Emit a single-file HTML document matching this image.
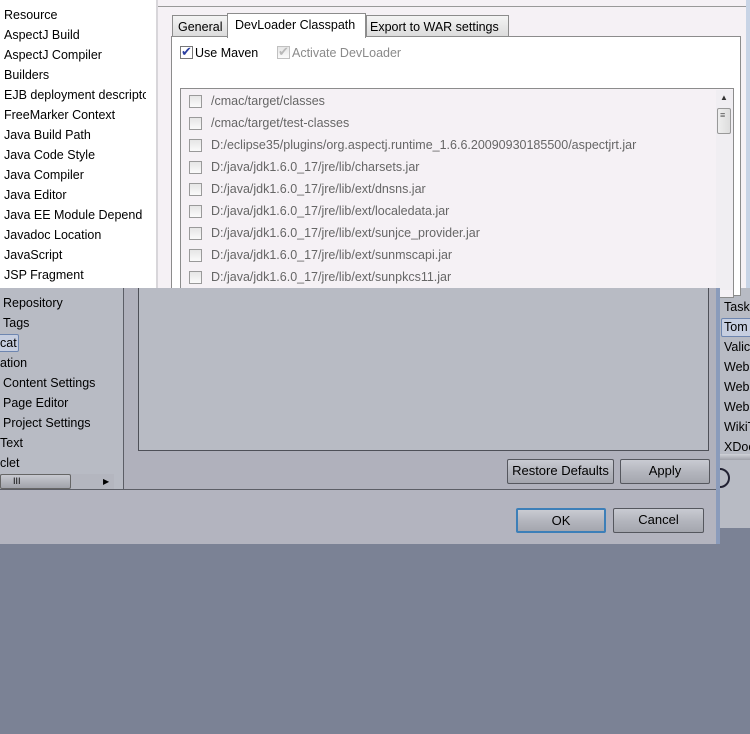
<!DOCTYPE html>
<html><head><style>
*{margin:0;padding:0;box-sizing:border-box}
body{width:750px;height:734px;position:relative;overflow:hidden;background:#7b8295;font-family:"Liberation Sans","DejaVu Sans",sans-serif;font-size:12.5px;color:#000}
.a{position:absolute}
.t{position:absolute;white-space:nowrap;line-height:16px}
.btn{position:absolute;border:1px solid #55575e;border-radius:2px;background:linear-gradient(#c9cbd2,#b4b6be 50%,#a4a6ae);text-align:center;line-height:22px;font-size:13px}
.cb{position:absolute;width:13px;height:13px;border:1px solid #9a9a9a;background:linear-gradient(#e6e6e6,#fafafa)}
</style></head><body>
<!-- right window (behind) -->
<div class="a" style="left:716px;top:288px;width:34px;height:240px;background:#b8bbc4"></div>
<div class="a" style="left:720px;top:454px;width:30px;height:6px;background:linear-gradient(#d0d2d8,#a0a2aa)"></div>
<div class="t" style="left:724px;top:279px;height:9px;overflow:hidden">Task</div>
<div class="t" style="left:724px;top:299px">Task</div>
<div class="a" style="left:721px;top:318px;width:32px;height:19px;border:1px solid #6e86b0;border-radius:2px;background:#c6cee0"></div>
<div class="t" style="left:724px;top:319px">Tom</div>
<div class="t" style="left:724px;top:339px">Valic</div>
<div class="t" style="left:724px;top:359px">Web</div>
<div class="t" style="left:724px;top:379px">Web</div>
<div class="t" style="left:724px;top:399px">Web</div>
<div class="t" style="left:724px;top:419px">WikiT</div>
<div class="t" style="left:724px;top:439px">XDoc</div>
<div class="a" style="left:710px;top:468px;width:20px;height:20px;border:2px solid #223;border-radius:50%"></div>
<!-- top white area -->
<div class="a" style="left:0;top:0;width:750px;height:288px;background:#f5f1f5"></div>
<div class="a" style="left:0;top:0;width:156px;height:288px;background:#fff"></div>
<div class="a" style="left:156px;top:0;width:2px;height:288px;background:#d8d6da"></div>
<div class="a" style="left:158px;top:6px;width:588px;height:1px;background:#999"></div>
<div class="a" style="left:746px;top:0;width:4px;height:288px;background:#c8d4e6"></div>
<div class="t" style="left:4px;top:7px">Resource</div>
<div class="t" style="left:4px;top:27px">AspectJ Build</div>
<div class="t" style="left:4px;top:47px">AspectJ Compiler</div>
<div class="t" style="left:4px;top:67px">Builders</div>
<div class="t" style="left:4px;top:87px;width:142px;overflow:hidden">EJB deployment descriptor</div>
<div class="t" style="left:4px;top:107px">FreeMarker Context</div>
<div class="t" style="left:4px;top:127px">Java Build Path</div>
<div class="t" style="left:4px;top:147px">Java Code Style</div>
<div class="t" style="left:4px;top:167px">Java Compiler</div>
<div class="t" style="left:4px;top:187px">Java Editor</div>
<div class="t" style="left:4px;top:207px">Java EE Module Depend</div>
<div class="t" style="left:4px;top:227px">Javadoc Location</div>
<div class="t" style="left:4px;top:247px">JavaScript</div>
<div class="t" style="left:4px;top:267px">JSP Fragment</div>
<!-- tabs -->
<div class="a" style="left:171px;top:36px;width:570px;height:260px;background:#fff;border:1px solid #8c8c8c"></div>
<div class="a" style="left:172px;top:15px;width:56px;height:22px;border:1px solid #8c8c8c;background:linear-gradient(#f4f4f4,#dcdcdc)"></div>
<div class="t" style="left:178px;top:19px">General</div>
<div class="a" style="left:366px;top:15px;width:143px;height:22px;border:1px solid #8c8c8c;background:linear-gradient(#f4f4f4,#dcdcdc)"></div>
<div class="t" style="left:370px;top:19px">Export to WAR settings</div>
<div class="a" style="left:227px;top:13px;width:139px;height:25px;border:1px solid #8c8c8c;border-bottom:none;background:#fff"></div>
<div class="t" style="left:235px;top:17px">DevLoader Classpath</div>
<div class="cb" style="left:180px;top:46px;background:#fff;border-color:#777"></div>
<div class="t" style="left:181px;top:44px;color:#2a3ea0;font-size:13px">✔</div>
<div class="t" style="left:195px;top:45px">Use Maven</div>
<div class="cb" style="left:277px;top:46px;border-color:#c0c0c0"></div>
<div class="t" style="left:278px;top:44px;color:#b8b8b8;font-size:13px">✔</div>
<div class="t" style="left:292px;top:45px;color:#8a8a8a">Activate DevLoader</div>
<div class="a" style="left:180px;top:88px;width:554px;height:210px;background:#f5f1f5;border:1px solid #8c8c8c"></div>
<div class="a" style="left:716px;top:90px;width:17px;height:200px;background:#f0eef2"></div>
<div class="t" style="left:720px;top:90px;font-size:8px;color:#333">▲</div>
<div class="a" style="left:717px;top:108px;width:14px;height:26px;border:1px solid #999;border-radius:2px;background:linear-gradient(90deg,#eee,#ddd)"></div>
<div class="t" style="left:720px;top:113px;font-size:9px;line-height:4px;color:#555">≡</div>
<div class="cb" style="left:189px;top:95px"></div><div class="t" style="left:211px;top:93px;color:#666">/cmac/target/classes</div>
<div class="cb" style="left:189px;top:117px"></div><div class="t" style="left:211px;top:115px;color:#666">/cmac/target/test-classes</div>
<div class="cb" style="left:189px;top:139px"></div><div class="t" style="left:211px;top:137px;color:#666">D:/eclipse35/plugins/org.aspectj.runtime_1.6.6.20090930185500/aspectjrt.jar</div>
<div class="cb" style="left:189px;top:161px"></div><div class="t" style="left:211px;top:159px;color:#666">D:/java/jdk1.6.0_17/jre/lib/charsets.jar</div>
<div class="cb" style="left:189px;top:183px"></div><div class="t" style="left:211px;top:181px;color:#666">D:/java/jdk1.6.0_17/jre/lib/ext/dnsns.jar</div>
<div class="cb" style="left:189px;top:205px"></div><div class="t" style="left:211px;top:203px;color:#666">D:/java/jdk1.6.0_17/jre/lib/ext/localedata.jar</div>
<div class="cb" style="left:189px;top:227px"></div><div class="t" style="left:211px;top:225px;color:#666">D:/java/jdk1.6.0_17/jre/lib/ext/sunjce_provider.jar</div>
<div class="cb" style="left:189px;top:249px"></div><div class="t" style="left:211px;top:247px;color:#666">D:/java/jdk1.6.0_17/jre/lib/ext/sunmscapi.jar</div>
<div class="cb" style="left:189px;top:271px"></div><div class="t" style="left:211px;top:269px;color:#666">D:/java/jdk1.6.0_17/jre/lib/ext/sunpkcs11.jar</div>
<!-- bottom grey dialog -->
<div class="a" style="left:0;top:288px;width:716px;height:256px;background:#b3b4bf"></div>
<div class="a" style="left:0;top:288px;width:124px;height:202px;background:#b8bbc4;border-right:1px solid #5c5e66"></div>
<div class="a" style="left:124px;top:288px;width:592px;height:202px;background:#b0b1bc"></div>
<div class="a" style="left:138px;top:288px;width:571px;height:163px;background:#b8bbc4;border:1px solid #4e5058;border-top:none"></div>
<div class="a" style="left:0;top:489px;width:716px;height:1px;background:#5c5e66"></div>
<div class="t" style="left:3px;top:295px">Repository</div>
<div class="t" style="left:3px;top:315px">Tags</div>
<div class="a" style="left:-4px;top:334px;width:23px;height:18px;border:1px solid #6e86b0;border-radius:2px;background:#c6cee0"></div>
<div class="t" style="left:0px;top:335px">cat</div>
<div class="t" style="left:0px;top:355px">ation</div>
<div class="t" style="left:3px;top:375px">Content Settings</div>
<div class="t" style="left:3px;top:395px">Page Editor</div>
<div class="t" style="left:3px;top:415px">Project Settings</div>
<div class="t" style="left:0px;top:435px">Text</div>
<div class="t" style="left:0px;top:455px">clet</div>
<div class="a" style="left:0;top:474px;width:114px;height:15px;background:#b4b6bf"></div>
<div class="a" style="left:0;top:474px;width:71px;height:15px;border:1px solid #666;border-radius:2px;background:linear-gradient(#c8c9d0,#a0a2aa)"></div>
<div class="t" style="left:13px;top:474px;font-size:9px;line-height:14px">III</div>
<div class="t" style="left:103px;top:475px;font-size:8px;line-height:13px">▶</div>
<div class="btn" style="left:507px;top:459px;width:107px;height:25px">Restore Defaults</div>
<div class="btn" style="left:620px;top:459px;width:90px;height:25px">Apply</div>
<div class="btn" style="left:516px;top:508px;width:90px;height:25px;border:2px solid #3d7fb8">OK</div>
<div class="btn" style="left:613px;top:508px;width:91px;height:25px">Cancel</div>
<div class="a" style="left:716px;top:288px;width:4px;height:256px;background:#8a9bbb"></div>
</body></html>
